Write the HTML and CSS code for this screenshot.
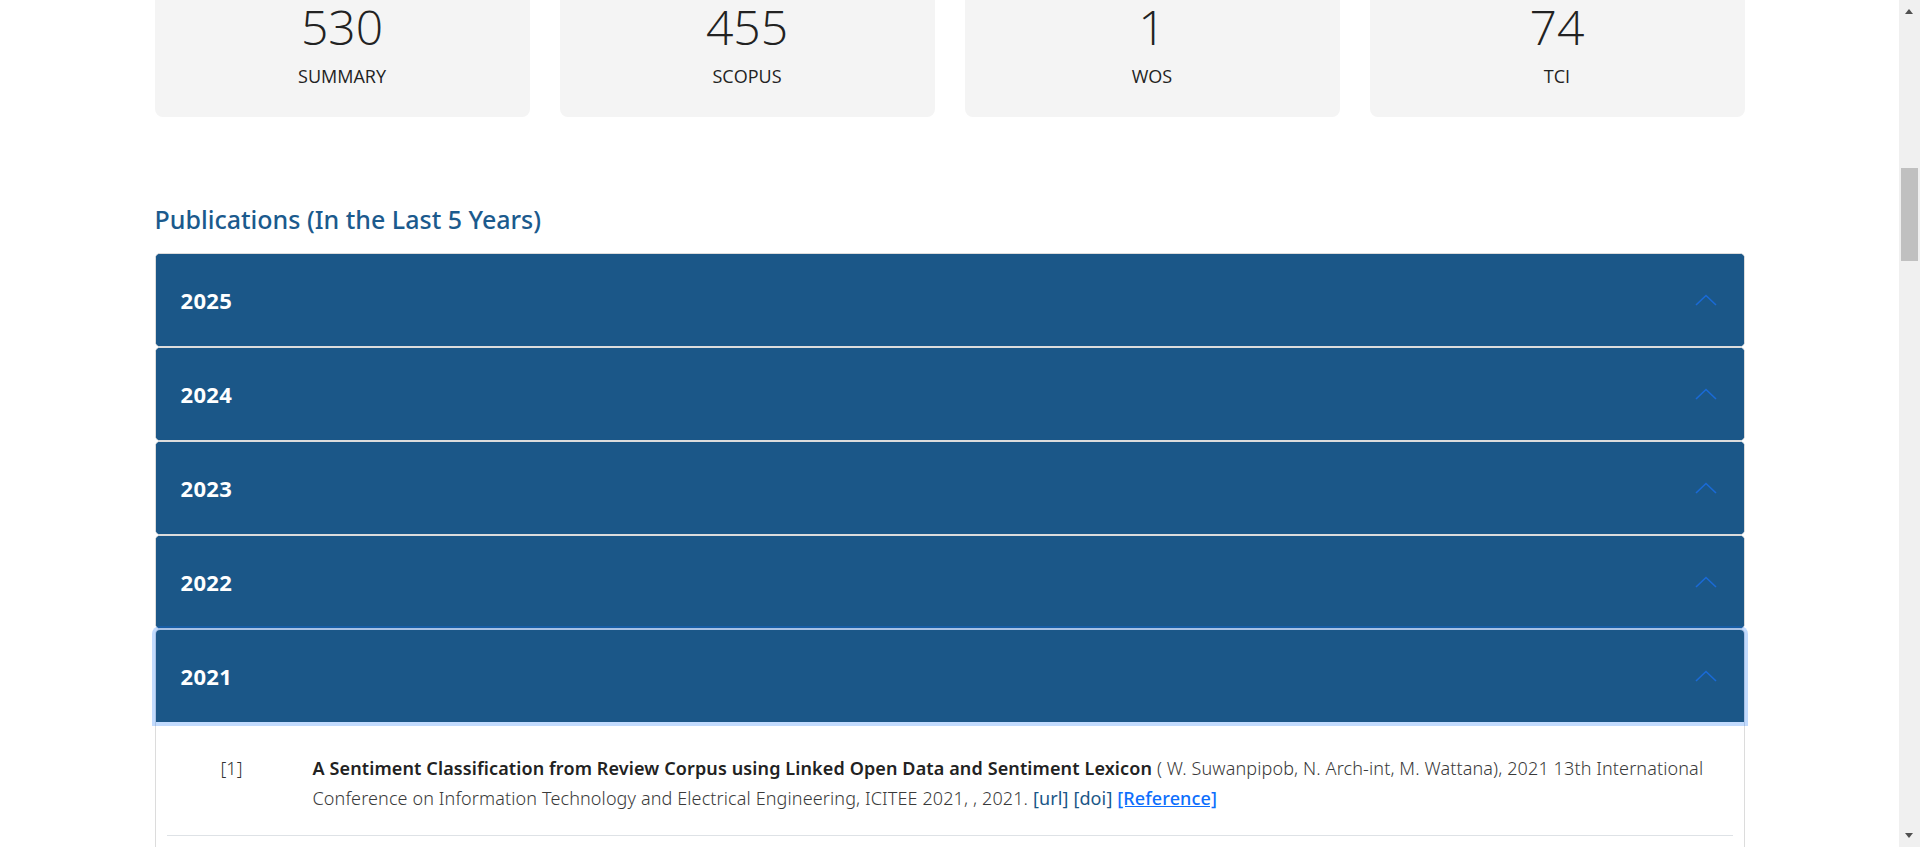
FILE: index.html
```html
<!DOCTYPE html>
<html lang="en">
<head>
<meta charset="utf-8">
<title>Publications</title>
<link rel="stylesheet" href="styles.css">
</head>
<body>
<div class="viewport">
  <main class="page">
    <section class="stats">
      <div class="stat"><div class="stat-num">530</div><div class="stat-label">SUMMARY</div></div>
      <div class="stat"><div class="stat-num">455</div><div class="stat-label">SCOPUS</div></div>
      <div class="stat"><div class="stat-num">1</div><div class="stat-label">WOS</div></div>
      <div class="stat"><div class="stat-num">74</div><div class="stat-label">TCI</div></div>
    </section>

    <h2 class="section-title">Publications (In the Last 5 Years)</h2>

    <div class="accordion">
      <div class="acc-item">
        <button class="acc-header" type="button"><span class="acc-year">2025</span><svg class="chev" width="22" height="12" viewBox="0 0 22 12"><polyline points="1,11 11,1.5 21,11" fill="none" stroke="#1a6ad6" stroke-width="1.6"/></svg></button>
      </div>
      <div class="acc-item">
        <button class="acc-header" type="button"><span class="acc-year">2024</span><svg class="chev" width="22" height="12" viewBox="0 0 22 12"><polyline points="1,11 11,1.5 21,11" fill="none" stroke="#1a6ad6" stroke-width="1.6"/></svg></button>
      </div>
      <div class="acc-item">
        <button class="acc-header" type="button"><span class="acc-year">2023</span><svg class="chev" width="22" height="12" viewBox="0 0 22 12"><polyline points="1,11 11,1.5 21,11" fill="none" stroke="#1a6ad6" stroke-width="1.6"/></svg></button>
      </div>
      <div class="acc-item">
        <button class="acc-header" type="button"><span class="acc-year">2022</span><svg class="chev" width="22" height="12" viewBox="0 0 22 12"><polyline points="1,11 11,1.5 21,11" fill="none" stroke="#1a6ad6" stroke-width="1.6"/></svg></button>
      </div>
      <div class="acc-item acc-open">
        <button class="acc-header acc-focus" type="button"><span class="acc-year">2021</span><svg class="chev" width="22" height="12" viewBox="0 0 22 12"><polyline points="1,11 11,1.5 21,11" fill="none" stroke="#1a6ad6" stroke-width="1.6"/></svg></button>
        <div class="acc-body">
          <ol class="pubs">
            <li class="pub">
              <span class="pub-no">[1]</span>
              <p class="pub-text"><strong class="pub-title">A Sentiment Classification from Review Corpus using Linked Open Data and Sentiment Lexicon</strong> ( W. Suwanpipob, N. Arch-int, M. Wattana), 2021 13th International Conference on Information Technology and Electrical Engineering, ICITEE 2021, , 2021. <a class="lnk" href="#">[url]</a> <a class="lnk" href="#">[doi]</a> <a class="ref" href="#">[Reference]</a></p>
            </li>
          </ol>
        </div>
      </div>
    </div>
  </main>
</div>

<div class="scrollbar" aria-hidden="true">
  <span class="sb-arrow sb-up"></span>
  <span class="sb-thumb"></span>
  <span class="sb-arrow sb-down"></span>
</div>
</body>
</html>
```

FILE: styles.css
```css
* { box-sizing: border-box; }

html, body {
  margin: 0;
  padding: 0;
  height: 847px;
  overflow: hidden;
  background: #ffffff;
}

body {
  font-family: "Noto Sans", "Open Sans", sans-serif;
  color: #212529;
}

.viewport {
  margin-right: 21px;
  height: 847px;
  overflow: hidden;
}

.page {
  width: 1590px;
  margin: 0 auto;
}

/* ---------- stats ---------- */
.stats {
  display: grid;
  grid-template-columns: repeat(4, 1fr);
  gap: 30px;
  margin-top: -40px;
}

.stat {
  background: #f4f4f4;
  border-radius: 8px;
  padding: 37px 16px 27px;
  text-align: center;
}

.stat-num {
  font-family: "Open Sans", sans-serif;
  font-weight: 300;
  font-size: 48px;
  line-height: 60px;
  color: #222;
}

.stat-label {
  font-family: "Open Sans", sans-serif;
  font-size: 18px;
  line-height: 27px;
  margin-top: 6px;
  color: #222;
}

/* ---------- heading ---------- */
.section-title {
  margin: 87px 0 18px;
  font-size: 25px;
  line-height: 31px;
  font-weight: 500;
  color: #1b5a8d;
}

/* ---------- accordion ---------- */
.accordion {
  display: flex;
  flex-direction: column;
}

.acc-item {
  border: 1px solid #dcdcdc;
  border-radius: 5px;
  background: #1b5788;
}

.acc-open {
  background: #ffffff;
  border-radius: 5px 5px 0 0;
  border-bottom: none;
}

.acc-header {
  display: flex;
  align-items: center;
  justify-content: space-between;
  width: 100%;
  height: 92px;
  padding: 0 27px 0 25px;
  border: 0;
  border-radius: 4px;
  background: #1b5788;
  color: #ffffff;
  font-family: inherit;
  cursor: pointer;
  position: relative;
}

.acc-open .acc-header {
  border-radius: 4px 4px 0 0;
}

.acc-focus {
  box-shadow: 0 0 0 4px rgba(13, 110, 253, 0.25);
  z-index: 1;
}

.acc-year {
  font-size: 22px;
  font-weight: 700;
  letter-spacing: 0.3px;
}

.chev {
  display: block;
}

/* ---------- body ---------- */
.acc-body {
  padding: 31px 11px 60px;
}

.pubs {
  list-style: none;
  margin: 0;
  padding: 0;
}

.pub {
  display: grid;
  grid-template-columns: 130px 1fr;
  column-gap: 16px;
  padding-bottom: 22px;
  border-bottom: 1px solid #dee2e6;
}

.pub-no {
  text-align: center;
  font-size: 18px;
  line-height: 30px;
  font-weight: 300;
  color: #333;
}

.pub-text {
  margin: 0;
  padding-right: 14px;
  font-size: 18px;
  line-height: 30px;
  font-weight: 300;
  letter-spacing: 0.12px;
  color: #3a3a3a;
}

.pub-title {
  font-weight: 600;
  color: #222;
}

.lnk {
  color: #1b5788;
  text-decoration: none;
  font-weight: 400;
}

.ref {
  color: #0d6efd;
  text-decoration: underline;
  font-weight: 500;
}

/* ---------- fake window scrollbar ---------- */
.scrollbar {
  position: fixed;
  top: 0;
  right: 0;
  width: 21px;
  height: 847px;
  background: #f0f0f0;
}

.sb-thumb {
  position: absolute;
  left: 2px;
  top: 168px;
  width: 17px;
  height: 93px;
  background: #c0c0c0;
}

.sb-arrow {
  position: absolute;
  left: 6px;
  width: 0;
  height: 0;
  border-left: 4.5px solid transparent;
  border-right: 4.5px solid transparent;
}

.sb-up {
  top: 9px;
  border-bottom: 5px solid #505050;
}

.sb-down {
  bottom: 9px;
  border-top: 5px solid #505050;
}
```
